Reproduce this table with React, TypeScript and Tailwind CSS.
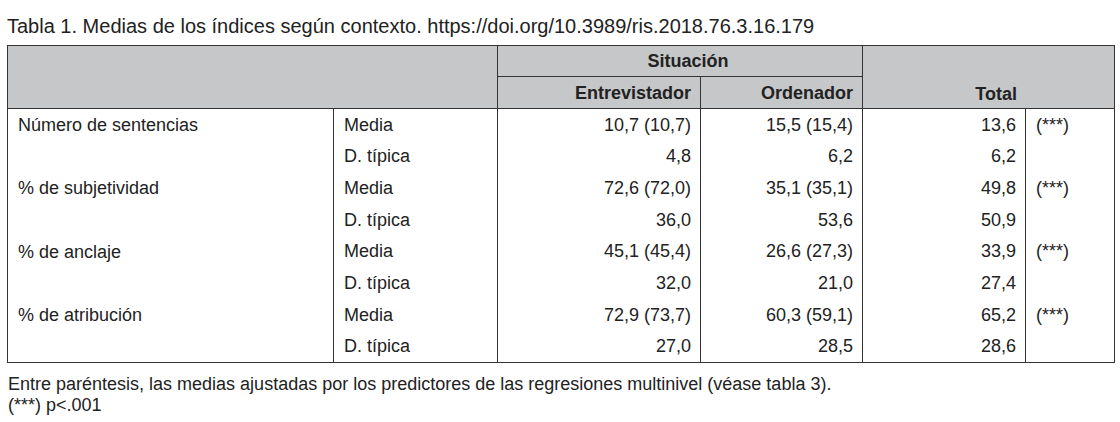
type Row = {
  label: string
  stat: string
  entrevistador: string
  ordenador: string
  total: string
  sig: string
}

const rows: Row[] = [
  { label: "Número de sentencias", stat: "Media", entrevistador: "10,7 (10,7)", ordenador: "15,5 (15,4)", total: "13,6", sig: "(***)" },
  { label: "", stat: "D. típica", entrevistador: "4,8", ordenador: "6,2", total: "6,2", sig: "" },
  { label: "% de subjetividad", stat: "Media", entrevistador: "72,6 (72,0)", ordenador: "35,1 (35,1)", total: "49,8", sig: "(***)" },
  { label: "", stat: "D. típica", entrevistador: "36,0", ordenador: "53,6", total: "50,9", sig: "" },
  { label: "% de anclaje", stat: "Media", entrevistador: "45,1 (45,4)", ordenador: "26,6 (27,3)", total: "33,9", sig: "(***)" },
  { label: "", stat: "D. típica", entrevistador: "32,0", ordenador: "21,0", total: "27,4", sig: "" },
  { label: "% de atribución", stat: "Media", entrevistador: "72,9 (73,7)", ordenador: "60,3 (59,1)", total: "65,2", sig: "(***)" },
  { label: "", stat: "D. típica", entrevistador: "27,0", ordenador: "28,5", total: "28,6", sig: "" },
]

export default function App() {
  const last = rows.length - 1
  return (
    <div className="h-[422px] w-[1120px] bg-white pl-[7px] pt-[13px] text-[#222] font-['Liberation_Sans',Arial,sans-serif]">
      {/* Caption */}
      <div className="h-[32px] text-[20px] leading-[26px]">
        Tabla 1. Medias de los índices según contexto. https://doi.org/10.3989/ris.2018.76.3.16.179
      </div>

      <table className="w-[1107px] table-fixed border-collapse text-[18px] leading-[22px]">
        <colgroup>
          <col className="w-[326px]" />
          <col className="w-[164px]" />
          <col className="w-[203px]" />
          <col className="w-[162px]" />
          <col className="w-[163px]" />
          <col className="w-[89px]" />
        </colgroup>
        <thead className="bg-[#c6c7c9] font-bold">
          <tr className="h-[31px]">
            <th colSpan={2} rowSpan={2} className="border border-[#333]" />
            <th colSpan={2} className="border border-[#333] pl-4 text-center">
              Situación
            </th>
            <th colSpan={2} rowSpan={2} className="border border-[#333] pb-[3px] pr-[97px] text-right align-bottom">
              Total
            </th>
          </tr>
          <tr className="h-[32px]">
            <th className="border border-[#333] pr-[9px] text-right">Entrevistador</th>
            <th className="border border-[#333] pr-[9px] text-right">Ordenador</th>
          </tr>
        </thead>
        <tbody>
          {rows.map((r, i) => (
            <tr key={i} className="h-[31.75px]">
              {i % 2 === 0 && (
                <td
                  rowSpan={2}
                  className={`border-x border-[#333] pl-[10px] pt-[5px] align-top ${i === last - 1 ? "border-b" : ""}`}
                >
                  {r.label}
                </td>
              )}
              <td className={`border-x border-[#333] pl-[10px] ${i === last ? "border-b" : ""}`}>
                {r.stat}
              </td>
              <td className={`border-x border-[#333] pr-[9px] text-right ${i === last ? "border-b" : ""}`}>
                {r.entrevistador}
              </td>
              <td className={`border-x border-[#333] pr-[9px] text-right ${i === last ? "border-b" : ""}`}>
                {r.ordenador}
              </td>
              <td className={`border-x border-[#333] pr-[9px] text-right ${i === last ? "border-b" : ""}`}>
                {r.total}
              </td>
              <td className={`border-x border-[#333] pl-[10px] ${i === last ? "border-b" : ""}`}>
                {r.sig}
              </td>
            </tr>
          ))}
        </tbody>
      </table>

      {/* Notes */}
      <div className="pl-px pt-[11px] text-[18px] leading-[21px]">
        <div>Entre paréntesis, las medias ajustadas por los predictores de las regresiones multinivel (véase tabla 3).</div>
        <div>(***) p&lt;.001</div>
      </div>
    </div>
  )
}
